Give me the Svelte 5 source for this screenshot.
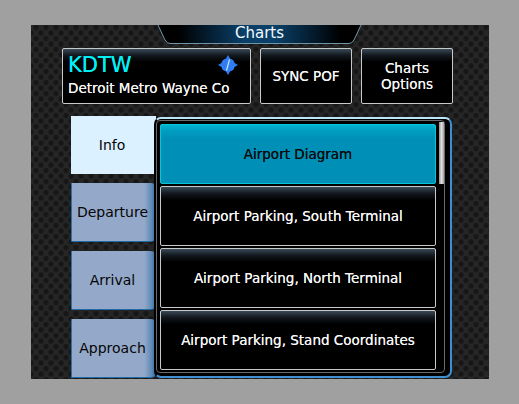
<script>
	const tabs = ['Info', 'Departure', 'Arrival', 'Approach'];
	const charts = [
		'Airport Diagram',
		'Airport Parking, South Terminal',
		'Airport Parking, North Terminal',
		'Airport Parking, Stand Coordinates'
	];
</script>

<main class="screen">
	<header class="title">
		<svg class="title-bg" width="205" height="19" viewBox="0 0 205 19">
			<defs>
				<linearGradient id="titleFill" x1="0" x2="1" y1="0" y2="0">
					<stop offset="0.1" stop-color="#000" />
					<stop offset="0.42" stop-color="#0a3f68" />
					<stop offset="0.58" stop-color="#0a3f68" />
					<stop offset="0.9" stop-color="#000" />
				</linearGradient>
			</defs>
			<path d="M1 0 L8 15 Q10 18.5 13 18.5 L192 18.5 Q195 18.5 197 15 L204 0 Z" fill="url(#titleFill)" />
			<path d="M1 0 L8 15 Q10 18.5 13 18.5 L192 18.5 Q195 18.5 197 15 L204 0" fill="none" stroke="#6f94a8" stroke-width="1" />
		</svg>
		<span>Charts</span>
	</header>

	<section class="top">
		<button class="btn airport">
			<span class="ident">KDTW</span>
			<span class="name">Detroit Metro Wayne Co</span>
			<svg class="symbol" width="22" height="22" viewBox="0 0 22 22">
				<path d="M11 1 L13 4.5 Q17 5.5 17.5 9 L21 11 L17.5 13 Q17 16.5 13 17.5 L11 21 L9 17.5 Q5 16.5 4.5 13 L1 11 L4.5 9 Q5 5.5 9 4.5 Z" fill="#2f7df2" />
				<line x1="12.5" y1="5.5" x2="9.5" y2="16.5" stroke="#cfe4ff" stroke-width="1.2" />
			</svg>
		</button>
		<button class="btn action">SYNC POF</button>
		<button class="btn action">Charts<br />Options</button>
	</section>

	<section class="body">
		<nav class="tabs">
			{#each tabs as tab, i}
				<div class="tab" class:active={i === 0}>{tab}</div>
			{/each}
		</nav>
		<div class="panel">
			<div class="inner">
				<div class="list">
					{#each charts as chart, i}
						<button class="btn row" class:selected={i === 0}>{chart}</button>
					{/each}
				</div>
				<div class="scroll"><div class="thumb"></div></div>
			</div>
		</div>
	</section>
</main>

<style>
	:global(body) {
		margin: 0;
		background: #a0a0a0;
		font-family: "DejaVu Sans", sans-serif;
	}
	.screen {
		width: 458px;
		height: 354px;
		margin: 25px 0 0 31px;
		overflow: hidden;
		display: flex;
		flex-direction: column;
		background-color: #262626;
		background-image:
			radial-gradient(circle at 5px 2.5px, #151515 0, #181818 2px, transparent 3.5px),
			radial-gradient(circle at 0 8px, #151515 0, #181818 2px, transparent 3.5px),
			radial-gradient(circle at 10px 8px, #151515 0, #181818 2px, transparent 3.5px);
		background-size: 10px 11px;
	}
	.title {
		position: relative;
		width: 205px;
		height: 19px;
		margin-left: 126px;
		text-align: center;
		color: #f4fafd;
		font-size: 15px;
		line-height: 16px;
	}
	.title-bg {
		position: absolute;
		left: 0;
		top: 0;
	}
	.title span {
		position: relative;
	}
	.top {
		display: flex;
		gap: 9px;
		margin: 4px 0 0 31px;
	}
	.btn {
		box-sizing: border-box;
		margin: 0;
		padding: 0;
		border: 1px solid #c9c9c9;
		border-radius: 2px;
		background: linear-gradient(#3a4a58 0, #141a20 6px, #000 13px);
		color: #f6f6f6;
		font-family: inherit;
		text-align: center;
		text-shadow: 0 0 0.4px currentColor;
	}
	.airport {
		position: relative;
		width: 189px;
		height: 56px;
		padding: 3px 0 0 5px;
		text-align: left;
		display: flex;
		flex-direction: column;
	}
	.ident {
		color: #00f0f8;
		font-size: 21px;
		line-height: 27px;
	}
	.name {
		font-size: 13.5px;
		line-height: 19px;
	}
	.symbol {
		position: absolute;
		left: 154px;
		top: 5px;
	}
	.action {
		width: 92px;
		height: 56px;
		font-size: 13.5px;
		line-height: 16px;
	}
	.body {
		display: flex;
		margin: 12px 0 0 40px;
		flex: 1;
		min-height: 0;
	}
	.tabs {
		width: 85px;
		display: flex;
		flex-direction: column;
		gap: 9px;
		flex: none;
	}
	.tab {
		box-sizing: border-box;
		height: 59px;
		flex: none;
		padding-right: 3px;
		display: flex;
		align-items: center;
		justify-content: center;
		background: linear-gradient(90deg, #94a9c9 86%, #5f88b4 95%, #1f6aa8);
		border-bottom: 1px solid #1f6aa8;
		border-left: 1px solid #2b6fa8;
		border-radius: 0 5px 5px 0;
		color: #050505;
		font-size: 14px;
	}
	.tab.active {
		height: 58px;
		background: #dcf1ff;
		border: 0;
		border-radius: 0;
	}
	.panel {
		box-sizing: border-box;
		width: 298px;
		height: 261px;
		margin: 1px 0 0 -2px;
		padding: 1px 5px 3px 0;
		background: #000;
		border: 2px solid #3f8fd0;
		border-left-color: #000;
		border-top-color: #bfe4f8;
		border-radius: 7px;
		position: relative;
		z-index: 1;
	}
	.inner {
		box-sizing: border-box;
		height: 100%;
		padding: 3px 0 1px 3px;
		display: flex;
		gap: 3px;
		border: 1px solid #6a6a6a;
		border-radius: 4px;
	}
	.list {
		width: 276px;
		flex: none;
		display: flex;
		flex-direction: column;
		gap: 2px;
	}
	.row {
		height: 60px;
		flex: none;
		font-size: 13.5px;
	}
	.row.selected {
		background: linear-gradient(#00b4d0 0, #009fc2 5px, #008fb6 14px);
		border-color: #00c8d8;
		color: #0c0c0c;
	}
	.scroll {
		width: 5px;
		flex: none;
	}
	.thumb {
		height: 62px;
		margin-top: -2px;
		background: linear-gradient(90deg, #909090, #e0e0e0, #a0a0a0);
	}
</style>
